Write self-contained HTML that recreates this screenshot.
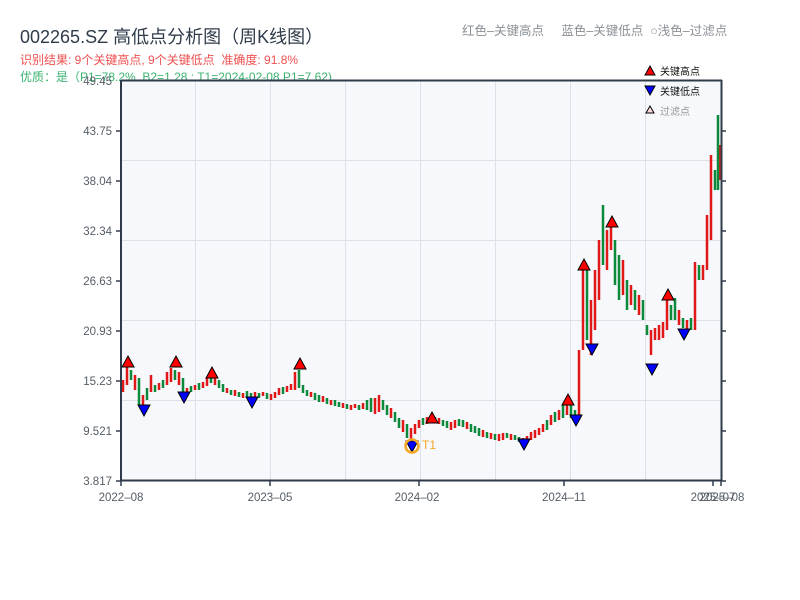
<!DOCTYPE html>
<html><head><meta charset="utf-8"><style>
html,body{margin:0;padding:0;background:#fff;width:800px;height:600px;overflow:hidden;font-family:"Liberation Sans","Noto Sans CJK SC",sans-serif}
.t{position:absolute;white-space:nowrap}
</style></head><body>
<div class="t" style="left:20px;top:23px;font-size:18px;color:#2f3b4a">002265.SZ 高低点分析图（周K线图）</div>
<div class="t" style="left:462px;top:20px;font-size:12.5px;color:#8a8f96">红色–关键高点&nbsp;&nbsp;&nbsp;&nbsp;&nbsp;蓝色–关键低点&nbsp;&nbsp;○浅色–过滤点</div>
<div class="t" style="left:20px;top:51px;font-size:12px;color:#f05050">识别结果: 9个关键高点, 9个关键低点&nbsp;&nbsp;准确度: 91.8%</div>
<div class="t" style="left:20px;top:68px;font-size:12px;color:#3cb371">优质：是（P1=78.2%, B2=1.28 ; T1=2024-02-08 P1=7.62)</div>
<svg width="800" height="600" style="position:absolute;left:0;top:0" xmlns="http://www.w3.org/2000/svg">
<rect x="121" y="80" width="600" height="400" fill="#f6f8fb"/>
<g stroke="#dde1e7" stroke-width="1">
<line x1="195.5" y1="80" x2="195.5" y2="480"/><line x1="270.5" y1="80" x2="270.5" y2="480"/><line x1="345.5" y1="80" x2="345.5" y2="480"/><line x1="420.5" y1="80" x2="420.5" y2="480"/><line x1="495.5" y1="80" x2="495.5" y2="480"/><line x1="570.5" y1="80" x2="570.5" y2="480"/><line x1="645.5" y1="80" x2="645.5" y2="480"/>
<line x1="121" y1="160.5" x2="721" y2="160.5"/><line x1="121" y1="240.5" x2="721" y2="240.5"/><line x1="121" y1="320.5" x2="721" y2="320.5"/><line x1="121" y1="400.5" x2="721" y2="400.5"/>
</g>
<path stroke="#e01818" stroke-width="2.5" fill="none" d="M123 380V392M127 365V385M135 375V390M143 395V405M151 375V392M159 383V390M167 372V385M171 368V382M179 372V385M187 388V394M195 385V390M203 382V388M207 378V386M215 378V385M227 388V393M235 390V396M243 393V398M255 392V397M263 392V396M271 394V400M275 392V398M279 388V395M287 386V392M291 384V390M295 372V390M311 392V397M323 396V402M331 400V405M343 403V408M351 405V410M355 404V408M363 403V409M375 398V414M379 395V412M391 408V418M403 420V432M411 428V442M415 424V434M419 420V428M427 417V424M431 415V422M439 418V424M451 422V430M455 420V428M467 422V429M483 430V437M491 433V439M499 434V441M503 433V440M511 434V440M523 438V444M527 436V442M531 432V440M535 430V438M539 428V435M543 424V432M551 415V425M559 410V420M567 402V415M579 350V420M583 262V350M591 300V355M595 270V330M599 240V300M607 230V270M611 225V250M623 260V295M631 285V305M639 295V315M651 330V355M655 328V340M659 325V340M663 322V338M667 300V330M679 310V325M687 320V330M695 262V330M703 265V280M707 215V270M711 155V240M720 145V180"/>
<path stroke="#0a8a3a" stroke-width="2.5" fill="none" d="M131 370V380M139 378V405M147 388V400M155 385V392M163 380V388M175 370V380M183 378V392M191 386V392M199 383V390M211 375V383M219 380V388M223 384V392M231 390V395M239 392V397M247 391V397M251 393V400M259 393V398M267 393V399M283 387V394M299 370V388M303 385V393M307 390V396M315 393V400M319 395V402M327 398V404M335 400V406M339 402V407M347 404V409M359 405V410M367 400V410M371 398V412M383 400V410M387 405V415M395 412V422M399 418V428M407 424V438M423 418V425M435 417V423M443 420V426M447 421V428M459 419V426M463 420V427M471 424V432M475 426V433M479 428V436M487 432V438M495 434V440M507 433V438M515 435V440M519 437V442M547 420V430M555 412V422M563 405V418M571 405V418M575 410V420M587 270V340M603 205V265M615 240V285M619 255V300M627 280V310M635 290V310M643 300V320M647 325V335M671 305V320M675 298V320M683 318V328M691 318V330M699 265V280M715 170V190M718 115V190"/>
<g stroke="#2f3b4a" stroke-width="2" fill="none">
<line x1="121" y1="80" x2="121" y2="481"/><line x1="120" y1="480.5" x2="722" y2="480.5"/><line x1="121" y1="80.5" x2="722" y2="80.5"/><line x1="721.5" y1="80" x2="721.5" y2="481"/>
</g>
<g stroke="#2f3b4a" stroke-width="1.5">
<line x1="116" y1="131" x2="121" y2="131"/><line x1="116" y1="181" x2="121" y2="181"/><line x1="116" y1="231" x2="121" y2="231"/><line x1="116" y1="281" x2="121" y2="281"/><line x1="116" y1="331" x2="121" y2="331"/><line x1="116" y1="381" x2="121" y2="381"/><line x1="116" y1="431" x2="121" y2="431"/><line x1="116" y1="481" x2="121" y2="481"/>
<line x1="721" y1="131" x2="726" y2="131"/><line x1="721" y1="181" x2="726" y2="181"/><line x1="721" y1="231" x2="726" y2="231"/><line x1="721" y1="281" x2="726" y2="281"/><line x1="721" y1="331" x2="726" y2="331"/><line x1="721" y1="381" x2="726" y2="381"/><line x1="721" y1="431" x2="726" y2="431"/><line x1="721" y1="481" x2="726" y2="481"/>
<line x1="121" y1="481" x2="121" y2="486"/><line x1="270" y1="481" x2="270" y2="486"/><line x1="419" y1="481" x2="419" y2="486"/><line x1="564" y1="481" x2="564" y2="486"/><line x1="713" y1="481" x2="713" y2="486"/><line x1="721" y1="481" x2="721" y2="486"/>
</g>
<g font-size="11.5" fill="#555d66" text-anchor="end" font-family="Liberation Sans,sans-serif">
<text x="112" y="85">49.45</text><text x="112" y="135">43.75</text><text x="112" y="185">38.04</text><text x="112" y="235">32.34</text><text x="112" y="285">26.63</text><text x="112" y="335">20.93</text><text x="112" y="385">15.23</text><text x="112" y="435">9.521</text><text x="112" y="485">3.817</text>
</g>
<g font-size="11.5" fill="#555d66" text-anchor="middle" font-family="Liberation Sans,sans-serif">
<text x="121" y="501">2022–08</text><text x="270" y="501">2023–05</text><text x="417" y="501">2024–02</text><text x="564" y="501">2024–11</text><text x="713" y="501">2025–07</text><text x="722" y="501">2025–08</text>
</g>
<g fill="#f00" stroke="#000" stroke-width="1">
<polygon points="128,356 134,367 122,367"/><polygon points="176,356 182,367 170,367"/><polygon points="212,367 218,378 206,378"/><polygon points="300,358 306,369 294,369"/><polygon points="432,412 438,423 426,423"/><polygon points="568,394 574,405 562,405"/><polygon points="584,259 590,270 578,270"/><polygon points="612,216 618,227 606,227"/><polygon points="668,289 674,300 662,300"/>
</g>
<g fill="#00f" stroke="#000" stroke-width="1">
<polygon points="138,405 150,405 144,416"/><polygon points="178,392 190,392 184,403"/><polygon points="246,397 258,397 252,408"/><polygon points="406,441 418,441 412,452"/><polygon points="518,439 530,439 524,450"/><polygon points="570,415 582,415 576,426"/><polygon points="586,344 598,344 592,355"/><polygon points="646,364 658,364 652,375"/><polygon points="678,329 690,329 684,340"/>
</g>
<circle cx="412" cy="446" r="6.5" fill="none" stroke="#f5a623" stroke-width="2.5"/>
<text x="422" y="449" font-size="12" fill="#f5a623">T1</text>
<polygon points="650,66 655,75 645,75" fill="#f00" stroke="#000" stroke-width="1"/>
<polygon points="645,86 655,86 650,95" fill="#00f" stroke="#000" stroke-width="1"/>
<polygon points="650,106 654,113 646,113" fill="#fdd" stroke="#000" stroke-width="1"/>
<text x="660" y="75" font-size="10" fill="#111">关键高点</text>
<text x="660" y="95" font-size="10" fill="#111">关键低点</text>
<text x="660" y="115" font-size="10" fill="#999">过滤点</text>
</svg>
</body></html>
